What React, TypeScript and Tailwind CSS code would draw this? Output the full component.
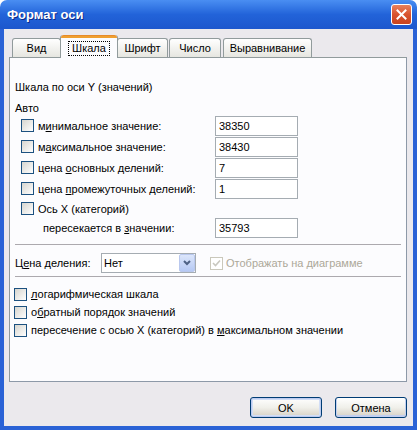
const Check = ({ disabled = false }: { disabled?: boolean }) =>
  disabled ? (
    <span className="flex-none w-[13px] h-[13px] border border-[#cac8bb] bg-white flex items-center justify-center">
      <svg width="9" height="9" viewBox="0 0 9 9">
        <path d="M1 4 L3.5 6.5 L8 1.5" stroke="#c8c7bf" strokeWidth="1.6" fill="none" />
      </svg>
    </span>
  ) : (
    <span className="flex-none w-[13px] h-[13px] border border-[#1c5180] bg-linear-to-br from-[#d6d5cf] to-white" />
  );

const U = ({ children }: { children: string }) => <span className="underline underline-offset-[1px]">{children}</span>;

const Field = ({ value }: { value: string }) => (
  <div className="w-[83px] h-[20px] border border-[#a5acb2] bg-white pl-[3px] flex items-center">{value}</div>
);

const Row = ({ label, value }: { label: React.ReactNode; value: string }) => (
  <div className="flex items-center h-[21px]">
    <div className="w-[205px] flex items-center gap-[4px] pl-[11px]">
      <Check />
      <span>{label}</span>
    </div>
    <Field value={value} />
  </div>
);

const tabs = [
  { name: "Вид", w: "w-[49px]" },
  { name: "Шкала", w: "w-[58px]", active: true },
  { name: "Шрифт", w: "w-[51px]" },
  { name: "Число", w: "w-[52px] ml-[1px]" },
  { name: "Выравнивание", w: "w-[89px] ml-[2px]" },
];

export default function App() {
  return (
    <div className="w-[417px] h-[430px] flex flex-col bg-white text-[11px] leading-[14px] text-black font-['Liberation_Sans',sans-serif]">
      {/* title bar */}
      <div className="h-[29px] flex-none rounded-t-[7px] bg-linear-to-b from-[#4a8ef2] via-[#2263d9] to-[#1d57cd] flex items-center pl-[7px] pr-[5px]">
        <span className="text-white font-bold text-[13px] [text-shadow:1px_1px_#0b2a8a]">Формат оси</span>
        <div className="ml-auto w-[21px] h-[21px] rounded-[3px] border border-white bg-linear-to-b from-[#e8805c] via-[#d9532e] to-[#c9431f] flex items-center justify-center">
          <svg width="11" height="11" viewBox="0 0 11 11">
            <path d="M1.5 1.5 L9.5 9.5 M9.5 1.5 L1.5 9.5" stroke="white" strokeWidth="2" strokeLinecap="square" />
          </svg>
        </div>
      </div>

      {/* body */}
      <div className="flex-1 flex flex-col border-x-4 border-b-4 border-[#2a62d6] bg-[#ebe9ed]">
        <div className="h-[28px] pt-[6px] pl-[8px] flex items-end relative z-10">
          {tabs.map((t) =>
            t.active ? (
              <div
                key={t.name}
                className={`${t.w} h-[23px] -mb-[1px] flex flex-col rounded-t-[3px] border-x border-[#919b9c] bg-[#fcfcfe] -ml-[1px] -mr-[1px]`}
              >
                <div className="h-[3px] rounded-t-[3px] bg-[#f0a030] border-t border-[#e68b2c]" />
                <div className="flex-1 flex items-center justify-center">
                  <span className="px-[3px] border border-dotted border-black leading-[13px]">{t.name}</span>
                </div>
              </div>
            ) : (
              <div
                key={t.name}
                className={`${t.w} h-[19px] rounded-t-[3px] border border-b-0 border-[#919b9c] bg-linear-to-b from-white to-[#e6e6e0] flex items-center justify-center`}
              >
                {t.name}
              </div>
            )
          )}
        </div>

        <div className="ml-[5px] w-[398px] h-[325px] border border-[#919b9c] border-r-[#8d99a8] border-b-[#8d99a8] bg-[#fcfcfe] pt-[22px]">
          <div className="pl-[5px]">Шкала по оси Y (значений)</div>
          <div className="pl-[5px] mt-[7px]">Авто</div>
          <Row label={<>м<U>и</U>нимальное значение:</>} value="38350" />
          <Row label={<>м<U>а</U>ксимальное значение:</>} value="38430" />
          <Row label={<>цена <U>о</U>сновных делений:</>} value="7" />
          <Row label={<>цена <U>п</U>ромежуточных делений:</>} value="1" />
          <div className="flex items-center h-[19px] pl-[11px] gap-[4px]">
            <Check />
            <span>Ось X (категорий)</span>
          </div>
          <div className="flex items-center h-[20px]">
            <div className="w-[205px] pl-[33px]">
              пересекается в <U>з</U>начении:
            </div>
            <Field value="35793" />
          </div>

          <div className="mx-[5px] mt-[6px] border-t border-[#aca9ae]" />

          <div className="flex items-center h-[20px] mt-[8px] pl-[5px]">
            <span className="w-[86px]">
              Ц<U>е</U>на деления:
            </span>
            <div className="w-[95px] h-[20px] border border-[#a5acb2] bg-white flex items-center">
              <span className="pl-[2px] flex-1">Нет</span>
              <div className="w-[16px] h-[18px] rounded-[2px] border border-[#b9c8ee] bg-linear-to-b from-[#dce6fb] to-[#b6c9f4] flex items-center justify-center">
                <svg width="8" height="6" viewBox="0 0 8 6">
                  <path d="M1 1 L4 4 L7 1" stroke="#4d6185" strokeWidth="2" fill="none" />
                </svg>
              </div>
            </div>
            <div className="ml-[14px] flex items-center gap-[3px] text-[#aca899]">
              <Check disabled />
              <span>Отображать на диаграмме</span>
            </div>
          </div>

          <div className="mx-[5px] mt-[3px] border-t border-[#aca9ae]" />

          <div className="mt-[10px] pl-[4px] flex flex-col gap-[4px]">
            <div className="flex items-center gap-[4px]">
              <Check />
              <span>
                <U>л</U>огарифмическая шкала
              </span>
            </div>
            <div className="flex items-center gap-[4px]">
              <Check />
              <span>
                о<U>б</U>ратный порядок значений
              </span>
            </div>
            <div className="flex items-center gap-[4px]">
              <Check />
              <span>
                пересечение с осью X (категорий) в <U>м</U>аксимальном значении
              </span>
            </div>
          </div>
        </div>

        <div className="mt-[15px] flex justify-end gap-[13px] pr-[6px]">
          <button className="w-[72px] h-[21px] rounded-[3px] border border-[#003c74] bg-linear-to-b from-white via-[#f0f0ea] to-[#d6d0c5] shadow-[inset_0_0_0_1px_#bccbf0,inset_0_0_0_2px_#d2def6]">
            OK
          </button>
          <button className="w-[72px] h-[21px] rounded-[3px] border border-[#003c74] bg-linear-to-b from-white via-[#f0f0ea] to-[#d6d0c5] shadow-[inset_0_-1px_0_1px_#c2cff0]">
            Отмена
          </button>
        </div>
      </div>
    </div>
  );
}
